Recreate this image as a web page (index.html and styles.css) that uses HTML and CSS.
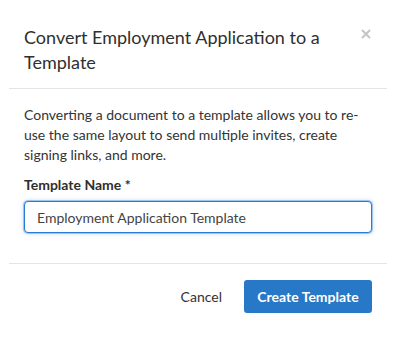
FILE: index.html
```html
<!DOCTYPE html>
<html lang="en">
<head>
<meta charset="utf-8">
<title>Convert to Template</title>
<link rel="stylesheet" href="styles.css">
</head>
<body>
<div class="modal">
  <div class="modal-header">
    <h2 class="modal-title">Convert Employment Application to a Template</h2>
    <button class="close" aria-label="Close">
      <svg width="10" height="10" viewBox="0 0 10 10"><path d="M1 1L9 9M9 1L1 9" stroke="#c4c4c4" stroke-width="2" stroke-linecap="butt"/></svg>
    </button>
  </div>
  <div class="divider"></div>
  <div class="modal-body">
    <p class="desc">Converting a document to a template allows you to re-use the same layout to send multiple invites, create signing links, and more.</p>
    <label class="label" for="tname">Template Name *</label>
    <input id="tname" class="input" type="text" value="Employment Application Template">
  </div>
  <div class="divider"></div>
  <div class="modal-footer">
    <button class="btn btn-link">Cancel</button>
    <button class="btn btn-primary">Create Template</button>
  </div>
</div>
</body>
</html>
```

FILE: styles.css
```css
html, body {
  margin: 0;
  padding: 0;
  background: #ffffff;
}
body {
  font-family: Lato, "Open Sans", "Liberation Sans", sans-serif;
  color: #333333;
}
.modal {
  width: 396px;
  height: 338px;
  background: #fff;
}
.modal-header {
  display: flex;
  align-items: flex-start;
  justify-content: space-between;
  padding: 25px 24px 13px 24px;
}
.modal-title {
  margin: 0;
  font-size: 18px;
  line-height: 25px;
  font-weight: 400;
  color: #2f2f2f;
  max-width: 326px;
}
.close {
  border: 0;
  background: none;
  padding: 0;
  margin: 4px 1px 0 0;
  width: 10px;
  height: 10px;
  display: flex;
  cursor: pointer;
}
.divider {
  height: 1px;
  background: #e4e4e4;
  margin: 0 9px;
}
.modal-body {
  padding: 16px 24px 30px 24px;
  display: flex;
  flex-direction: column;
}
.desc {
  margin: 0;
  font-size: 14px;
  line-height: 20px;
  color: #333;
}
.label {
  margin-top: 10px;
  font-size: 14px;
  line-height: 20px;
  font-weight: 700;
  color: #2f2f2f;
}
.input {
  margin-top: 6px;
  box-sizing: border-box;
  width: 348px;
  height: 32px;
  padding: 0 12px;
  font-family: inherit;
  font-size: 14px;
  color: #444;
  border: 1px solid #2a7bd1;
  border-radius: 4px;
  box-shadow: 0 0 0 1px rgba(42,123,209,0.35), 0 0 5px rgba(42,123,209,0.35);
  outline: none;
  background: #fff;
}
.modal-footer {
  display: flex;
  justify-content: flex-end;
  align-items: center;
  gap: 6px;
  padding: 16px 24px 0 24px;
}
.btn {
  font-family: inherit;
  font-size: 14px;
  height: 33px;
  border-radius: 3px;
  border: 0;
  cursor: pointer;
}
.btn-link {
  background: none;
  color: #333;
  padding: 0 16px;
}
.btn-primary {
  background: #2878c8;
  color: #fff;
  font-weight: 700;
  width: 128px;
  padding: 0;
}
```
